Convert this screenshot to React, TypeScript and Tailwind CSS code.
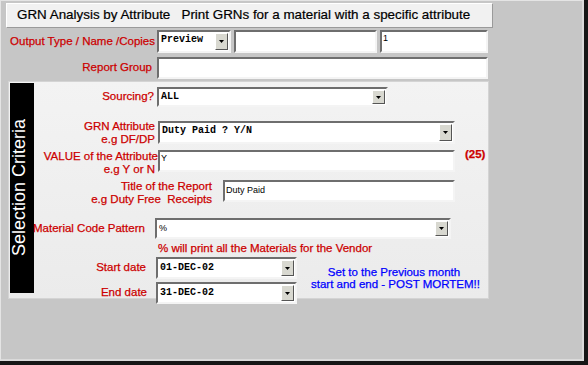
import React from "react";

const label =
  "font-['Liberation_Sans',Arial,sans-serif] text-[11.5px] text-[#cc0000] [-webkit-text-stroke:0.25px_#cc0000]";
const mono = "font-['Liberation_Mono','Courier_New',monospace] font-bold text-[10px] text-black";
const sunken =
  "bg-white border-2 border-t-[#6e6e6e] border-l-[#6e6e6e] border-b-[#f4f4f4] border-r-[#f4f4f4]";

const DropButton: React.FC = () => (
  <div className="w-[13px] self-stretch my-[1px] mr-[1px] flex items-center justify-center bg-[#d8d8d0] border border-t-white border-l-white border-b-[#555] border-r-[#555]">
    <svg width="5" height="3" viewBox="0 0 5 3">
      <path d="M0 0h5L2.5 3z" fill="#000" />
    </svg>
  </div>
);

const Select: React.FC<{ value: string; className: string; textClass?: string }> = ({
  value,
  className,
  textClass = mono,
}) => (
  <div className={`flex ${sunken} ${className}`}>
    <div className={`flex-1 pl-[2px] pt-[2px] leading-[12px] ${textClass}`}>{value}</div>
    <DropButton />
  </div>
);

const Input: React.FC<{ value?: string; className: string }> = ({ value, className }) => (
  <div
    className={`${sunken} ${className} pl-[1px] pt-[1px] font-['Liberation_Sans',Arial,sans-serif] text-[9px] leading-[11px] text-black`}
  >
    {value}
  </div>
);

export default function App() {
  return (
    <div className="w-[588px] h-[365px] bg-[#161616] pr-[4px] pb-[4px]">
      <div className="h-full bg-[#c6c6c6] border-l border-t border-[#e4e4e4] border-r-[2px] border-b-[2px] border-r-[#dadada] border-b-[#dadada] pt-[2px] pl-[5px]">
        {/* title bar */}
        <div className="w-[487px] h-[25px] flex items-center pl-[10px] bg-[#f1f1f1] border border-t-white border-l-white border-b-[#9a9a9a] border-r-[#9a9a9a]">
          <span className="font-['Liberation_Sans',Arial,sans-serif] text-[13.4px] text-black whitespace-pre [-webkit-text-stroke:0.2px_#000]">
            GRN Analysis by Attribute   Print GRNs for a material with a specific attribute
          </span>
        </div>

        {/* output row */}
        <div className="flex items-center h-[23px] mt-[2px]">
          <div className={`w-[149px] text-right ${label}`}>Output Type / Name /Copies</div>
          <Select value="Preview" className="ml-[2px] w-[74px] h-[23px]" />
          <Input className="ml-[3px] w-[143px] h-[23px]" />
          <Input value="1" className="ml-[3px] w-[108px] h-[23px]" />
        </div>

        {/* report group */}
        <div className="flex items-center h-[22px] mt-[4px]">
          <div className={`w-[149px] pr-[3px] text-right ${label}`}>Report Group</div>
          <Input className="ml-[2px] w-[331px] h-[22px]" />
        </div>

        {/* selection criteria panel */}
        <div className="mt-[2px] ml-[2px] w-[481px] h-[218px] flex bg-gradient-to-b from-[#f3f3f3] to-[#ebebeb] border border-[#d4d4d4]">
          <div className="ml-[1px] mt-[1px] w-[24px] h-[210px] bg-black flex items-center justify-center pr-[7px]">
            <span className="[writing-mode:vertical-rl] rotate-180 font-['Liberation_Sans',Arial,sans-serif] text-[18px] leading-none text-white whitespace-nowrap">
              Selection Criteria
            </span>
          </div>

          <div className="flex-1 flex flex-col">
            {/* sourcing */}
            <div className="flex items-center mt-[5px] h-[20px]">
              <div className={`w-[120px] text-right ${label}`}>Sourcing?</div>
              <Select value="ALL" className="ml-[3px] w-[231px] h-[20px]" />
            </div>

            {/* grn attribute */}
            <div className="flex items-start mt-[14px]">
              <div className={`w-[121px] -mt-[1px] text-right leading-[13px] ${label}`}>
                GRN Attribute
                <br />
                e.g DF/DP
              </div>
              <Select
                value="Duty Paid ? Y/N"
                className="ml-[3px] w-[297px] h-[23px]"
                textClass={`${mono} pt-[1px]`}
              />
            </div>

            {/* value */}
            <div className="flex items-start mt-[4px]">
              <div className={`w-[121px] text-right leading-[13px] whitespace-nowrap -mr-[3px] ${label}`}>
                <span className="-mr-[3px]">VALUE of the Attribute</span>
                <br />
                e.g Y or N
              </div>
              <Input value="Y" className="ml-[6px] w-[297px] h-[22px]" />
              <div className={`ml-[10px] -mt-[4px] font-bold ${label}`}>(25)</div>
            </div>

            {/* title */}
            <div className="flex items-start mt-[4px]">
              <div className={`w-[178px] text-right leading-[13px] whitespace-pre ${label}`}>
                Title of the Report
                <br />
                {"e.g Duty Free  Receipts"}
              </div>
              <Input value="Duty Paid" className="ml-[11px] w-[232px] h-[22px] pt-[3px]" />
            </div>

            <div className="mt-[9px] ml-[6px] w-[430px] h-[2px] bg-gradient-to-b from-[#dd4a4a] to-[#f0b0b0]" />

            {/* material code */}
            <div className="flex items-center mt-[3px] h-[21px]">
              <div className={`w-[111px] -ml-[1px] whitespace-nowrap ${label}`}>Material Code Pattern</div>
              <Select
                value="%"
                className="ml-[11px] w-[296px] h-[21px]"
                textClass="font-['Liberation_Sans',Arial,sans-serif] text-[9px] text-black"
              />
            </div>

            <div className={`mt-[3px] ml-[124px] h-[13px] leading-[13px] ${label}`}>
              % will print all the Materials for the Vendor
            </div>

            {/* dates */}
            <div className="flex mt-[2px]">
              <div className="flex flex-col">
                <div className="flex items-center h-[22px]">
                  <div className={`w-[112px] text-right ${label}`}>Start date</div>
                  <Select value="01-DEC-02" className="ml-[10px] w-[141px] h-[22px]" textClass={`${mono} pt-[3px]`} />
                </div>
                <div className="flex items-center h-[22px] mt-[3px]">
                  <div className={`w-[113px] text-right ${label}`}>End date</div>
                  <Select value="31-DEC-02" className="ml-[9px] w-[141px] h-[22px]" textClass={`${mono} pt-[3px]`} />
                </div>
              </div>
              <div className="ml-[14px] mt-[9px] w-[166px] text-center whitespace-nowrap font-['Liberation_Sans',Arial,sans-serif] text-[11.5px] leading-[12px] text-[#0000ff] [-webkit-text-stroke:0.25px_#0000ff]">
                Set to the Previous month
                <br />
                start and end - POST MORTEM!!
              </div>
            </div>
          </div>
        </div>
      </div>
    </div>
  );
}
